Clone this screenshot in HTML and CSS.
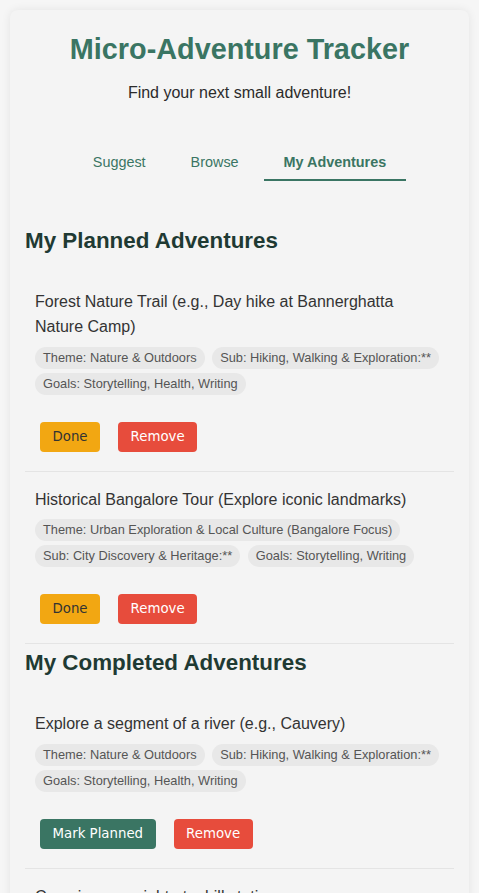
FILE: index.html
```html
<!DOCTYPE html>
<html lang="en">
<head>
<meta charset="utf-8">
<title>Micro-Adventure Tracker</title>
<link rel="stylesheet" href="styles.css">
</head>
<body>
<div class="container">
  <header class="header">
    <h1 class="title">Micro-Adventure Tracker</h1>
    <p class="subtitle">Find your next small adventure!</p>
  </header>
  <nav class="tabs">
    <button class="tab">Suggest</button>
    <button class="tab">Browse</button>
    <button class="tab active">My Adventures</button>
  </nav>
  <section class="section">
    <h2 class="section-title">My Planned Adventures</h2>
    <div class="item">
      <div class="item-title">Forest Nature Trail (e.g., Day hike at Bannerghatta Nature Camp)</div>
      <div class="tags">
        <span class="tag">Theme: Nature &amp; Outdoors</span>
        <span class="tag">Sub: Hiking, Walking &amp; Exploration:**</span>
        <span class="tag">Goals: Storytelling, Health, Writing</span>
      </div>
      <div class="actions">
        <button class="btn btn-done">Done</button>
        <button class="btn btn-remove">Remove</button>
      </div>
    </div>
    <div class="item">
      <div class="item-title">Historical Bangalore Tour (Explore iconic landmarks)</div>
      <div class="tags">
        <span class="tag">Theme: Urban Exploration &amp; Local Culture (Bangalore Focus)</span>
        <span class="tag">Sub: City Discovery &amp; Heritage:**</span>
        <span class="tag">Goals: Storytelling, Writing</span>
      </div>
      <div class="actions">
        <button class="btn btn-done">Done</button>
        <button class="btn btn-remove">Remove</button>
      </div>
    </div>
  </section>
  <section class="section">
    <h2 class="section-title completed">My Completed Adventures</h2>
    <div class="item">
      <div class="item-title">Explore a segment of a river (e.g., Cauvery)</div>
      <div class="tags">
        <span class="tag">Theme: Nature &amp; Outdoors</span>
        <span class="tag">Sub: Hiking, Walking &amp; Exploration:**</span>
        <span class="tag">Goals: Storytelling, Health, Writing</span>
      </div>
      <div class="actions">
        <button class="btn btn-planned">Mark Planned</button>
        <button class="btn btn-remove">Remove</button>
      </div>
    </div>
    <div class="item">
      <div class="item-title">Camping overnight at a hill station</div>
      <div class="tags">
        <span class="tag">Theme: Nature &amp; Outdoors</span>
        <span class="tag">Sub: Camping &amp; Stargazing:**</span>
      </div>
      <div class="actions">
        <button class="btn btn-planned">Mark Planned</button>
        <button class="btn btn-remove">Remove</button>
      </div>
    </div>
  </section>
</div>
</body>
</html>
```
FILE: styles.css
```css
html, body {
  margin: 0;
  padding: 0;
}
body {
  background: #f6f6f6;
  font-family: "Liberation Sans", Arial, sans-serif;
  color: #333;
  padding: 10px;
}
.container {
  background: #f4f4f4;
  border-radius: 8px;
  box-shadow: 0 0 10px rgba(0, 0, 0, 0.08);
  padding: 22px 15px 20px;
}
.header {
  text-align: center;
}
.title {
  margin: 0;
  font-size: 28.8px;
  font-weight: bold;
  color: #3a7563;
  line-height: 1.2;
}
.subtitle {
  margin: 17px 0 0;
  font-size: 16px;
  color: #2b2b2b;
}
.tabs {
  display: flex;
  justify-content: center;
  gap: 5px;
  margin-top: 52px;
}
.tab {
  background: none;
  border: none;
  border-bottom: 2px solid transparent;
  padding: 0 20px 9px;
  font-family: "Liberation Sans", Arial, sans-serif;
  font-size: 14.4px;
  color: #3a7563;
  cursor: pointer;
}
.tab.active {
  font-weight: bold;
  border-bottom-color: #3a7563;
}
.section-title {
  margin: 47px 0 20px;
  font-size: 22.4px;
  font-weight: bold;
  color: #1f3a33;
}
.section-title.completed {
  margin-top: 6px;
}
.item {
  padding: 15px 10px;
  border-bottom: 1px solid #e4e4e4;
}
.item-title {
  font-size: 16px;
  line-height: 1.6;
  color: #333;
  margin-bottom: 7px;
}
.tags {
  display: flex;
  flex-wrap: wrap;
  gap: 4px 7.5px;
}
.tag {
  background: #e8e8e8;
  color: #555;
  font-size: 12.8px;
  line-height: 14px;
  padding: 4px 8px;
  border-radius: 11px;
}
.actions {
  display: flex;
  gap: 18px;
  margin: 27px 0 4px 5px;
}
.btn {
  border: none;
  border-radius: 4px;
  padding: 7px 12.5px 8px;
  font-family: "DejaVu Sans", sans-serif;
  font-size: 13.333px;
  cursor: pointer;
}
.btn-done {
  background: #f2a712;
  color: #333;
}
.btn-remove {
  background: #e74c3c;
  color: #fff;
}
.btn-planned {
  background: #3a7563;
  color: #fff;
}
```
